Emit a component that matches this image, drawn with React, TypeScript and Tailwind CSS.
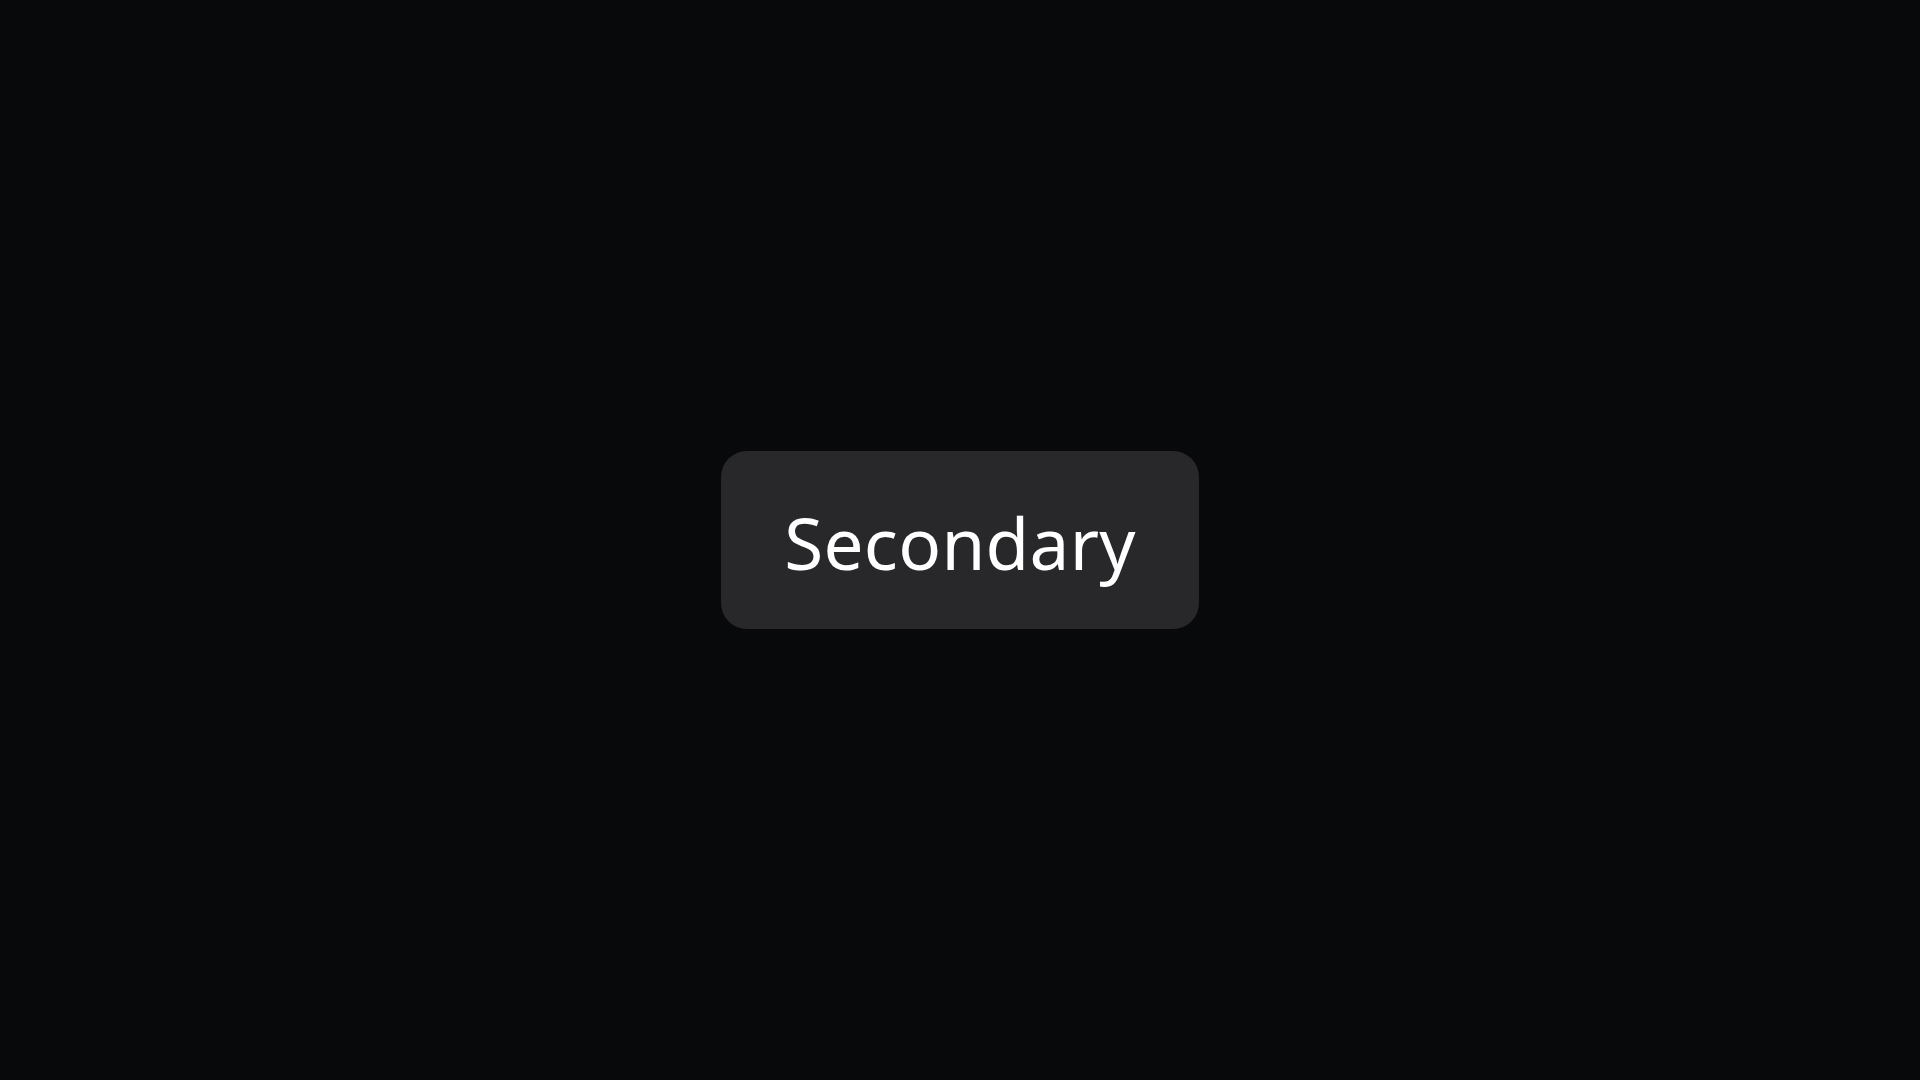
const App = () => {
  return (
    <div className="flex h-screen w-full items-center justify-center bg-[#08090b]">
      <button
        type="button"
        className="flex h-[178px] w-[478px] items-center justify-center rounded-[26px] bg-[#28282b] text-[71px] leading-none text-white"
        style={{ fontFamily: '"Noto Sans", "Open Sans", sans-serif' }}
      >
        <span className="mt-[4px] tracking-[0.3px]">Secondary</span>
      </button>
    </div>
  );
};

export default App;
